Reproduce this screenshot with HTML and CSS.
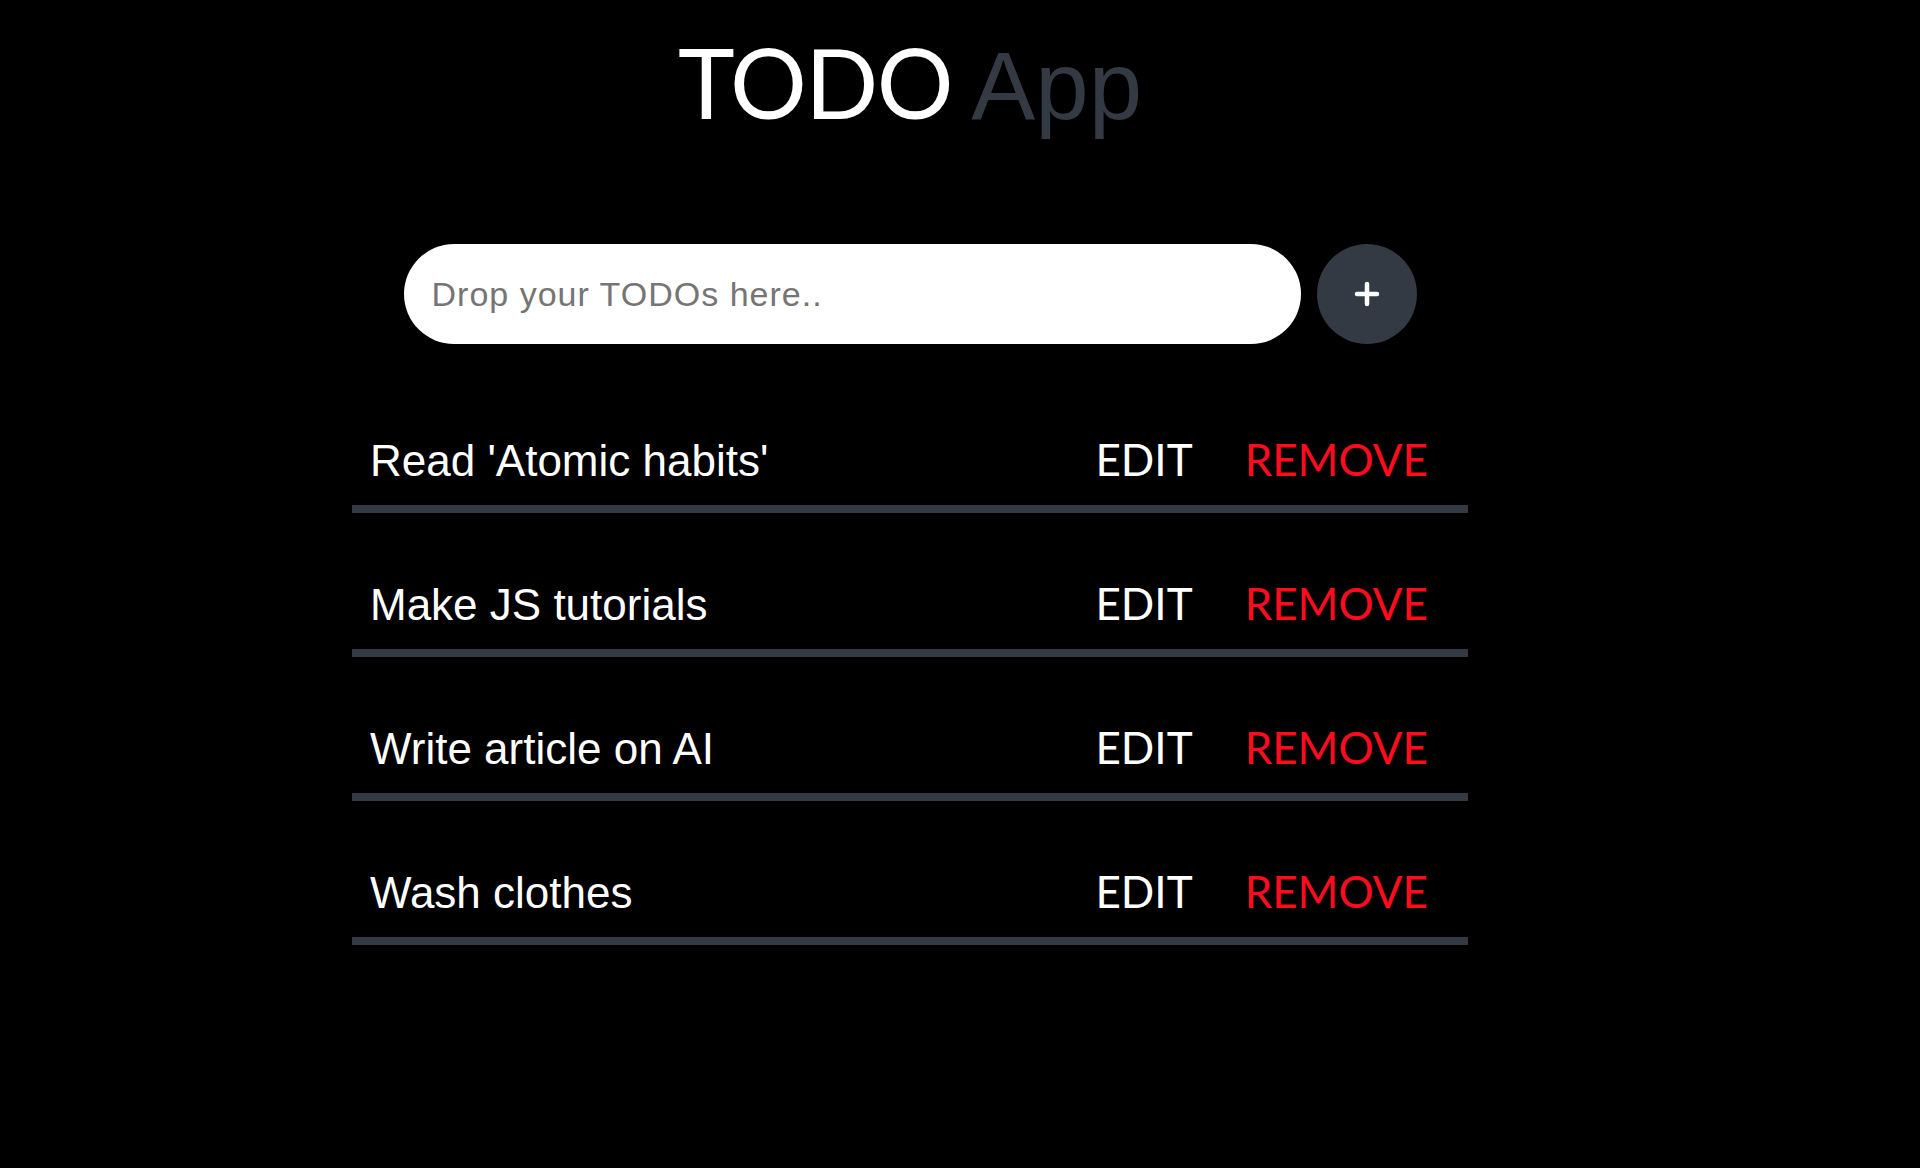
FILE: index.html
```html
<!DOCTYPE html>
<html lang="en">
<head>
<meta charset="utf-8">
<title>TODO App</title>
<link rel="stylesheet" href="styles.css">
</head>
<body>
<main class="app">
  <h1 class="title">TODO <span class="title-accent">App</span></h1>
  <form class="add-form">
    <input class="add-input" type="text" placeholder="Drop your TODOs here..">
    <button class="add-btn" type="button" aria-label="Add">
      <svg width="26" height="26" viewBox="0 0 26 26"><path d="M13 3v20M3 13h20" stroke="#fff" stroke-width="4.5" stroke-linecap="round" fill="none"/></svg>
    </button>
  </form>
  <ul class="todo-list">
    <li class="todo"><span class="todo-text">Read 'Atomic habits'</span><span class="actions"><span class="edit">EDIT</span><span class="remove">REMOVE</span></span></li>
    <li class="todo"><span class="todo-text">Make JS tutorials</span><span class="actions"><span class="edit">EDIT</span><span class="remove">REMOVE</span></span></li>
    <li class="todo"><span class="todo-text">Write article on AI</span><span class="actions"><span class="edit">EDIT</span><span class="remove">REMOVE</span></span></li>
    <li class="todo"><span class="todo-text">Wash clothes</span><span class="actions"><span class="edit">EDIT</span><span class="remove">REMOVE</span></span></li>
  </ul>
</main>
</body>
</html>
```
FILE: styles.css
```css
html, body {
  margin: 0;
  background: #000;
}
body {
  padding-right: 100px;
  min-height: 1168px;
  box-sizing: border-box;
}
.app {
  width: 1116px;
  margin: 0 auto;
}
.title {
  margin: 24px 0 0;
  text-align: center;
  font-family: Lato, "Liberation Sans", sans-serif;
  font-weight: 400;
  font-size: 96px;
  line-height: 116px;
  letter-spacing: -1.5px;
  word-spacing: -4px;
  color: #fff;
}
.title-accent {
  font-family: "Liberation Sans", Arial, sans-serif;
  letter-spacing: 0;
  color: #343a43;
}
.add-form {
  margin: 100px 0 0;
  display: flex;
  justify-content: center;
  gap: 16px;
}
.add-input {
  width: 897px;
  height: 100px;
  box-sizing: border-box;
  border: none;
  border-radius: 50px;
  padding: 0 28px;
  background: #fff;
  font-family: "Liberation Sans", Arial, sans-serif;
  font-size: 34px;
  letter-spacing: 1px;
  color: #222;
  outline: none;
}
.add-input::placeholder {
  color: #757575;
}
.add-btn {
  width: 100px;
  height: 100px;
  border: none;
  border-radius: 50%;
  background: #343a43;
  padding: 0;
  display: flex;
  align-items: center;
  justify-content: center;
}
.todo-list {
  list-style: none;
  margin: 25px 0 0;
  padding: 0;
}
.todo {
  height: 144px;
  box-sizing: border-box;
  padding: 68px 40px 0 18px;
  border-bottom: 8px solid #343a43;
  display: flex;
  align-items: baseline;
  justify-content: space-between;
}
.todo-text {
  font-family: "Liberation Sans", Arial, sans-serif;
  font-size: 44px;
  line-height: 44px;
  color: #fff;
}
.actions {
  display: flex;
  align-items: baseline;
  gap: 52px;
  font-family: Lato, sans-serif;
  font-size: 44px;
  line-height: 44px;
}
.edit {
  color: #fff;
}
.remove {
  color: #fe0b1d;
}
```
